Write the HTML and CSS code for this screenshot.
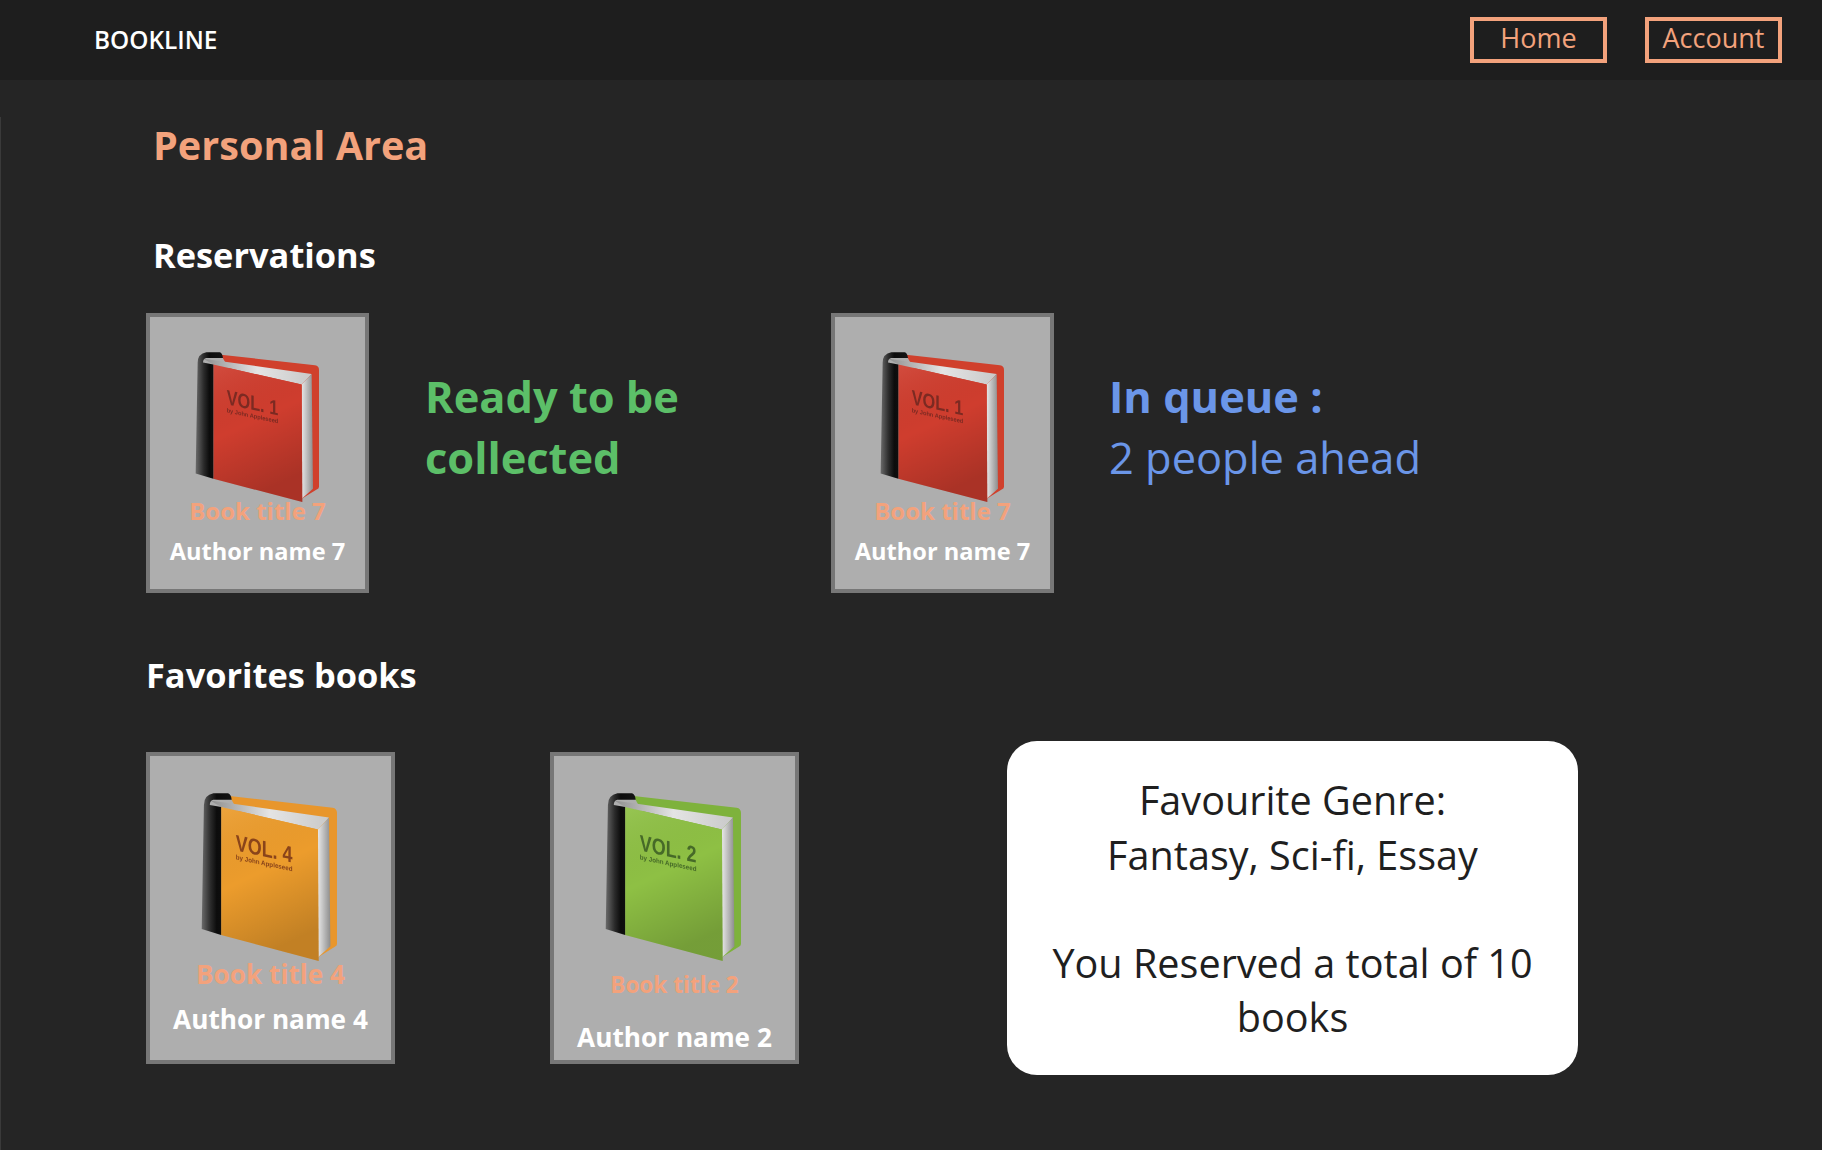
FILE: index.html
```html
<!doctype html>
<html lang="en">
<head>
    <meta charset="UTF-8">
    <title>Bookline</title>
    <link rel="stylesheet" href="styles.css">
</head>
<body>
<svg class="defs" width="0" height="0" aria-hidden="true">
    <defs>
        <linearGradient id="pagesTop" x1="0" y1="0" x2="1" y2="0">
            <stop offset="0" stop-color="#8f8f8f"/>
            <stop offset="0.5" stop-color="#e4e4e4"/>
            <stop offset="1" stop-color="#c9c9c9"/>
        </linearGradient>
        <linearGradient id="pagesSide" x1="0" y1="0" x2="1" y2="0">
            <stop offset="0" stop-color="#e6e6e6"/>
            <stop offset="1" stop-color="#8d8d8d"/>
        </linearGradient>
        <linearGradient id="spine" x1="0" y1="0" x2="1" y2="0">
            <stop offset="0" stop-color="#6a6a6a"/>
            <stop offset="0.3" stop-color="#2a2a2a"/>
            <stop offset="0.5" stop-color="#0c0c0c"/>
            <stop offset="1" stop-color="#141414"/>
        </linearGradient>
        <linearGradient id="shade" x1="0" y1="0" x2="0.3" y2="1">
            <stop offset="0" stop-color="#fff" stop-opacity="0.08"/>
            <stop offset="0.5" stop-color="#000" stop-opacity="0"/>
            <stop offset="1" stop-color="#000" stop-opacity="0.18"/>
        </linearGradient>
        <symbol id="book" viewBox="0 0 372 452" preserveAspectRatio="none">
            <path class="back" d="M78 8 L360 40 Q372 42 372 54 L372 406 Q372 412 365 414 L320 442 Z"/>
            <path d="M25 20 L350 66 L320 98 L55 38 Z" fill="url(#pagesTop)"/>
            <path d="M320 98 L350 66 L354 412 L320 442 Z" fill="url(#pagesSide)"/>
            <path class="front" d="M55 38 L320 98 L322 452 L55 382 Z"/>
            <path d="M55 38 L320 98 L322 452 L55 382 Z" fill="url(#shade)"/>
            <path d="M8 32 Q8 6 34 1 L74 1 Q82 3 84 18 L34 18 Q24 20 24 32 L55 38 L55 382 L2 366 Z" fill="url(#spine)"/>
        </symbol>
    </defs>
</svg>

<div class="navbar">
    <div class="logo">BOOKLINE</div>
    <div class="nav-links">
        <a class="nav-btn">Home</a>
        <a class="nav-btn">Account</a>
    </div>
</div>

<div class="Main">
    <h1 class="page-title">Personal Area</h1>
    <h2 class="res-title">Reservations</h2>

    <div class="res-row">
        <div class="res-item">
            <div class="card card-small">
                <svg class="book red"><use href="#book"/><g class="cover-text"><text class="vol" x="95" y="137" textLength="155" lengthAdjust="spacingAndGlyphs">VOL. 1</text><text class="by" x="95" y="161" textLength="155" lengthAdjust="spacingAndGlyphs">by John Appleseed</text></g></svg>
                <div class="book-title">Book title 7</div>
                <div class="author">Author name 7</div>
            </div>
            <div class="status ready"><b>Ready to be<br>collected</b></div>
        </div>
        <div class="res-item">
            <div class="card card-small">
                <svg class="book red"><use href="#book"/><g class="cover-text"><text class="vol" x="95" y="137" textLength="155" lengthAdjust="spacingAndGlyphs">VOL. 1</text><text class="by" x="95" y="161" textLength="155" lengthAdjust="spacingAndGlyphs">by John Appleseed</text></g></svg>
                <div class="book-title">Book title 7</div>
                <div class="author">Author name 7</div>
            </div>
            <div class="status queue"><b>In queue :</b><br>2 people ahead</div>
        </div>
    </div>

    <h2 class="fav-title">Favorites books</h2>

    <div class="fav-row">
        <div class="card card-big">
            <svg class="book orange"><use href="#book"/><g class="cover-text"><text class="vol" x="95" y="137" textLength="155" lengthAdjust="spacingAndGlyphs">VOL. 4</text><text class="by" x="95" y="161" textLength="155" lengthAdjust="spacingAndGlyphs">by John Appleseed</text></g></svg>
            <div class="book-title">Book title 4</div>
            <div class="author">Author name 4</div>
        </div>
        <div class="card card-big card-spaced">
            <svg class="book green"><use href="#book"/><g class="cover-text"><text class="vol" x="95" y="137" textLength="155" lengthAdjust="spacingAndGlyphs">VOL. 2</text><text class="by" x="95" y="161" textLength="155" lengthAdjust="spacingAndGlyphs">by John Appleseed</text></g></svg>
            <div class="book-title">Book title 2</div>
            <div class="author">Author name 2</div>
        </div>
        <div class="summary">
            <p>Favourite Genre:<br>Fantasy, Sci-fi, Essay</p>
            <p>You Reserved a total of 10 books</p>
        </div>
    </div>
</div>
</body>
</html>
```

FILE: styles.css
```css
* {
    box-sizing: border-box;
}
body {
    margin: 0;
    font-family: "Open Sans", "Noto Sans", sans-serif;
    background-color: #252525;
    color: #fff;
    height: 1150px;
    overflow: hidden;
}
.defs {
    display: block;
    height: 0;
}

/* nav */
.navbar {
    height: 80px;
    background-color: #1e1e1e;
    display: flex;
    justify-content: space-between;
    align-items: center;
    padding: 0 40px 0 94px;
}
.logo {
    font-size: 24.4px;
    font-weight: 600;
    line-height: 30px;
}
.nav-links {
    display: flex;
    gap: 38px;
}
.nav-btn {
    width: 137px;
    height: 46px;
    border: 4px solid #f3a27c;
    color: #f3a27c;
    font-size: 27px;
    line-height: 34px;
    text-align: center;
}

/* main */
.Main {
    height: 1070px;
    padding: 0 0 0 145px;
    border-left: 1px solid #3a3a3a;
}
.page-title {
    margin: 37px 0 0 7px;
    font-size: 39.6px;
    line-height: 56px;
    font-weight: 700;
    color: #f3a27c;
}
.res-title {
    margin: 59px 0 0 7px;
    font-size: 34.4px;
    line-height: 46px;
    font-weight: 700;
}
.res-row {
    display: flex;
    margin-top: 35px;
}
.res-item {
    width: 685px;
    display: flex;
}
.fav-title {
    margin: 59px 0 0 0;
    font-size: 34.4px;
    line-height: 46px;
    font-weight: 700;
}
.fav-row {
    display: flex;
    align-items: center;
    margin-top: 43px;
}

/* cards */
.card {
    background-color: #aeaeae;
    border: 4px solid #777;
    display: flex;
    flex-direction: column;
    align-items: center;
}
.card-small {
    width: 223px;
    height: 280px;
    padding-top: 35px;
}
.card-big {
    width: 249px;
    height: 312px;
    padding-top: 37px;
}
.card-spaced {
    margin-left: 155px;
}
.book {
    width: 124px;
    height: 150px;
    flex: none;
    margin-right: 2px;
    filter: blur(0.4px);
}
.card-big .book {
    width: 136px;
    height: 168px;
    margin-right: 4px;
}
.back {
    fill: var(--back);
}
.front {
    fill: var(--front);
}
.red {
    --back: #d0402c;
    --front: #cf3d2e;
}
.orange {
    --back: #e8962c;
    --front: #ec9c2c;
}
.green {
    --back: #7eb23c;
    --front: #8ec044;
}
.red text { fill: #7c2a22; }
.orange text { fill: #8a441a; }
.green text { fill: #466a28; }
.cover-text {
    transform: scale(0.333) skewY(12deg);
    font-family: "Liberation Sans", Arial, sans-serif;
}
.card-big .cover-text {
    transform: scale(0.366) skewY(12deg);
}
.vol {
    font-size: 62px;
    font-weight: 700;
}
.by {
    font-size: 18px;
    font-weight: 700;
}
.book-title {
    color: #f3a27c;
    font-size: 24px;
    line-height: 30px;
    font-weight: 700;
    margin-top: -6px;
}
.author {
    font-size: 23.6px;
    line-height: 32px;
    font-weight: 700;
    margin-top: 9px;
}
.card-big .book-title {
    font-size: 26.2px;
    line-height: 34px;
    margin-top: -4px;
}
.card-big .author {
    font-size: 26.2px;
    line-height: 36px;
    margin-top: 10px;
}
.card-spaced .book-title {
    font-size: 22.6px;
    margin-top: 7px;
}
.card-spaced .author {
    margin-top: 17px;
}

/* status */
.status {
    margin-left: 56px;
    margin-top: 53px;
    font-size: 43.4px;
    line-height: 61px;
}
.ready {
    color: #5cbf68;
}
.queue {
    margin-left: 55px;
    color: #6b96e8;
}

/* summary box */
.summary {
    width: 571px;
    height: 334px;
    margin-left: 208px;
    padding: 32px 40px;
    background-color: #fff;
    border-radius: 30px;
    color: #1f1f1f;
    font-size: 39.6px;
    line-height: 54.5px;
    text-align: center;
}
.summary p {
    margin: 0 0 53.5px;
}
.summary p:last-child {
    margin-bottom: 0;
}
```
